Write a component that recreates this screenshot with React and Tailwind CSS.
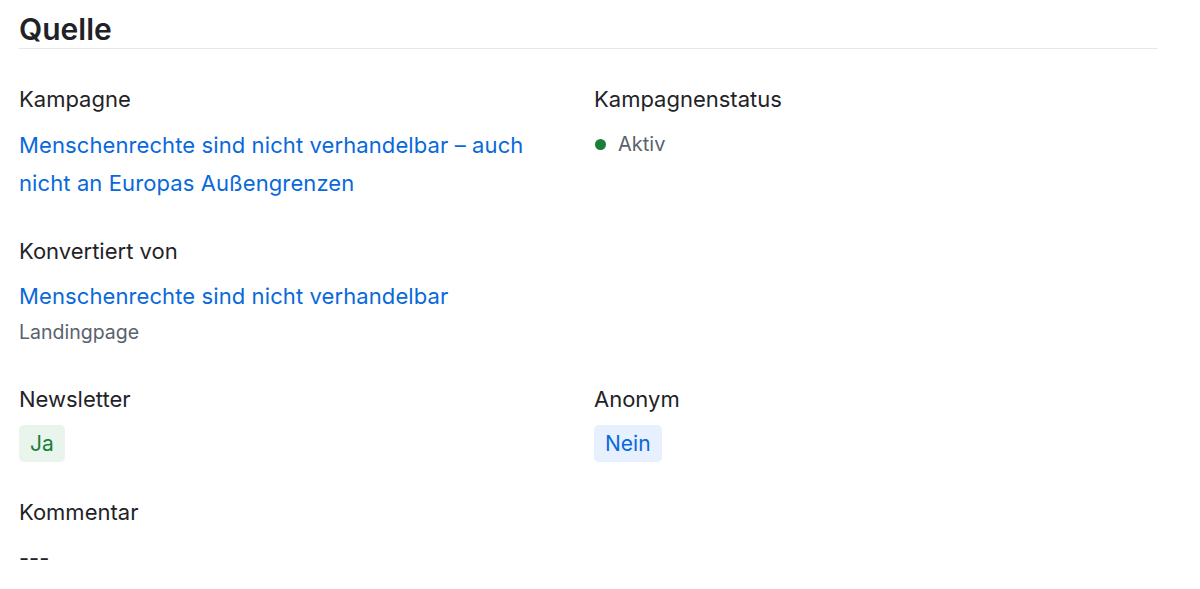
export default function App() {
  const font = { fontFamily: 'Inter, "Noto Sans", sans-serif' };
  return (
    <div className="min-h-[589px] bg-white pl-[19px] pr-[42px] pt-[11px]" style={font}>
      <h2 className="text-[30px] leading-[36px] font-semibold text-[#1f2328] pb-[1px] border-b border-[#e5e7eb]">
        Quelle
      </h2>

      <div className="grid grid-cols-2 gap-x-[11px] mt-[34px]">
        <div className="pr-[24px]">
          <div className="text-[22px] leading-[32px] text-[#1f2328]">Kampagne</div>
          <a href="#" className="block mt-[11px] text-[22px] leading-[38px] tracking-[0.1px] text-[#0969da]">
            Menschenrechte sind nicht verhandelbar – auch nicht an Europas Außengrenzen
          </a>
        </div>
        <div className="pr-[24px]">
          <div className="text-[22px] leading-[32px] text-[#1f2328]">Kampagnenstatus</div>
          <div className="mt-[11px] flex items-center gap-[12px] h-[36px]">
            <span className="w-[11px] h-[11px] rounded-full bg-[#1a7f37] ml-[1px]"></span>
            <span className="text-[20px] leading-[36px] text-[#59636e]">Aktiv</span>
          </div>
        </div>
      </div>

      <div className="mt-[33px]">
        <div className="text-[22px] leading-[32px] text-[#1f2328]">Konvertiert von</div>
        <a href="#" className="inline-block mt-[10px] text-[22px] leading-[38px] tracking-[0.1px] text-[#0969da]">
          Menschenrechte sind nicht verhandelbar
        </a>
        <div className="mt-[4px] text-[19.5px] leading-[27px] text-[#59636e]">Landingpage</div>
      </div>

      <div className="grid grid-cols-2 gap-x-[11px] mt-[37px]">
        <div>
          <div className="text-[22px] leading-[32px] text-[#1f2328]">Newsletter</div>
          <div className="mt-[10px] flex">
            <span className="h-[37px] px-[11px] flex items-center rounded-[5px] bg-[#e9f4ec] text-[#1a7f37] text-[21px]">
              Ja
            </span>
          </div>
        </div>
        <div>
          <div className="text-[22px] leading-[32px] text-[#1f2328]">Anonym</div>
          <div className="mt-[10px] flex">
            <span className="h-[37px] px-[11px] flex items-center rounded-[5px] bg-[#e6f0fe] text-[#0969da] text-[21px]">
              Nein
            </span>
          </div>
        </div>
      </div>

      <div className="mt-[34px]">
        <div className="text-[22px] leading-[32px] text-[#1f2328]">Kommentar</div>
        <div className="mt-[14px] text-[22px] leading-[32px] text-[#1f2328]">---</div>
      </div>
    </div>
  );
}
